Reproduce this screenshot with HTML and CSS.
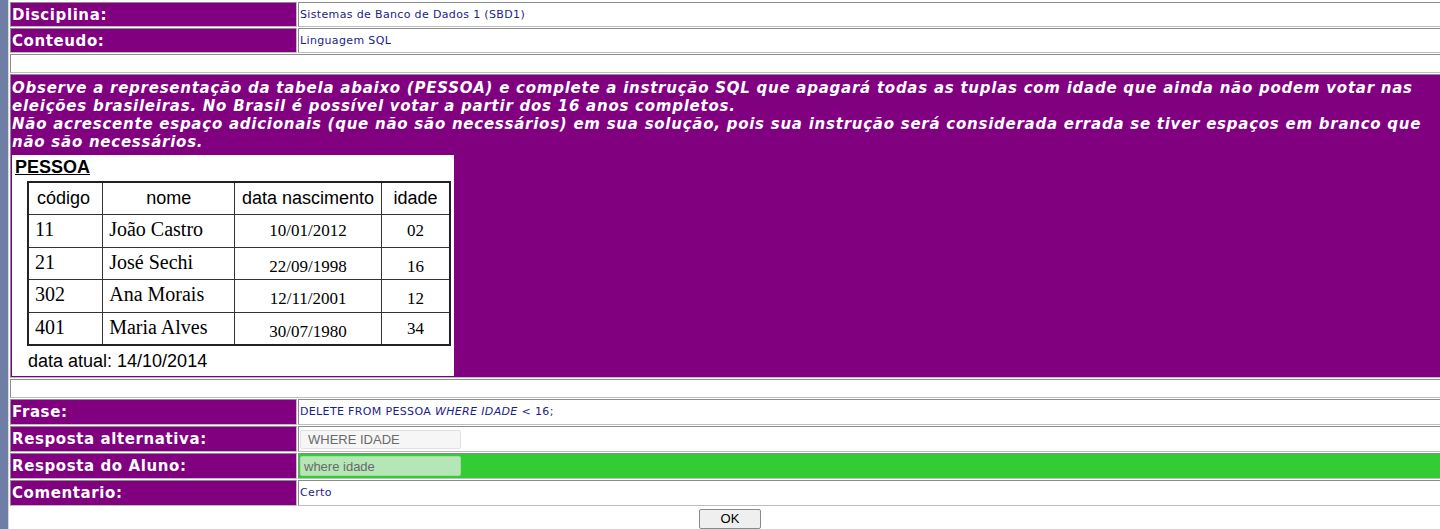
FILE: index.html
```html
<!DOCTYPE html>
<html lang="pt">
<head>
<meta charset="utf-8">
<title>Questão</title>
<link rel="stylesheet" href="styles.css">
</head>
<body>
<div class="page">
  <div class="strip"></div>
  <div class="content">
    <table class="main">
      <tr>
        <td class="label">Disciplina:</td>
        <td class="value">Sistemas de Banco de Dados 1 (SBD1)</td>
      </tr>
      <tr>
        <td class="label">Conteudo:</td>
        <td class="value">Linguagem SQL</td>
      </tr>
      <tr><td class="blank" colspan="2"></td></tr>
      <tr>
        <td class="question" colspan="2">
          <p class="qtext">Observe a representação da tabela abaixo (PESSOA) e complete a instrução SQL que apagará todas as tuplas com idade que ainda não podem votar nas eleições brasileiras. No Brasil é possível votar a partir dos 16 anos completos.<br>Não acrescente espaço adicionais (que não são necessários) em sua solução, pois sua instrução será considerada errada se tiver espaços em branco que não são necessários.</p>
          <div class="figure">
            <div class="fig-title">PESSOA</div>
            <table class="pessoa">
              <tr class="head">
                <th class="c1">código</th>
                <th class="c2">nome</th>
                <th class="c3">data nascimento</th>
                <th class="c4">idade</th>
              </tr>
              <tr>
                <td class="c1">11</td>
                <td class="c2">João Castro</td>
                <td class="c3">10/01/2012</td>
                <td class="c4">02</td>
              </tr>
              <tr>
                <td class="c1">21</td>
                <td class="c2">José Sechi</td>
                <td class="c3 low">22/09/1998</td>
                <td class="c4 low">16</td>
              </tr>
              <tr>
                <td class="c1">302</td>
                <td class="c2">Ana Morais</td>
                <td class="c3 low">12/11/2001</td>
                <td class="c4 low">12</td>
              </tr>
              <tr>
                <td class="c1">401</td>
                <td class="c2">Maria Alves</td>
                <td class="c3 low">30/07/1980</td>
                <td class="c4">34</td>
              </tr>
            </table>
            <div class="fig-date">data atual: 14/10/2014</div>
          </div>
        </td>
      </tr>
      <tr><td class="blank" colspan="2"></td></tr>
      <tr>
        <td class="label tall">Frase:</td>
        <td class="value">DELETE FROM PESSOA <i>WHERE IDADE</i> &lt; 16;</td>
      </tr>
      <tr>
        <td class="label tall">Resposta alternativa:</td>
        <td class="value"><input class="field alt" type="text" value="WHERE IDADE" readonly></td>
      </tr>
      <tr>
        <td class="label tall">Resposta do Aluno:</td>
        <td class="value ok-bg"><input class="field aluno" type="text" value="where idade" readonly></td>
      </tr>
      <tr>
        <td class="label tall">Comentario:</td>
        <td class="value">Certo</td>
      </tr>
      <tr>
        <td class="btnrow" colspan="2"><button class="okbtn" type="button">OK</button></td>
      </tr>
    </table>
  </div>
</div>
</body>
</html>
```

FILE: styles.css
```css
html, body {
  margin: 0;
  padding: 0;
  background: #ffffff;
}

.page {
  display: flex;
  width: 1440px;
  height: 529px;
  overflow: hidden;
}

.strip {
  flex: 0 0 8px;
  background: #6f7ea5;
  border-right: 1px solid #d8d8d8;
}

.content {
  flex: 1 0 auto;
  width: 1442px;
  padding-top: 1px;
}

.main {
  border-collapse: separate;
  border-spacing: 1px;
  width: 1442px;
  font-family: "DejaVu Sans", Verdana, sans-serif;
}

.main > tbody > tr > td {
  border: 1px solid;
  border-color: #8c8c8c #bdbdbd #bdbdbd #8c8c8c;
  padding: 0 1px;
}

.label {
  width: 283px;
  height: 23px;
  background: #800080;
  color: #ffffff;
  font-weight: bold;
  font-size: 15px;
  line-height: 18px;
  letter-spacing: 0.6px;
  vertical-align: middle;
}

.label.tall {
  height: 24px;
}

.value {
  color: #1c1c8a;
  font-size: 11px;
  line-height: 14px;
  letter-spacing: 0.35px;
  vertical-align: middle;
}

.blank {
  height: 17px;
}

.question {
  background: #800080;
  color: #ffffff;
  padding: 4px 1px 1px !important;
}

.qtext {
  margin: 0;
  font-weight: bold;
  font-style: italic;
  font-size: 15px;
  letter-spacing: 0.75px;
  line-height: 18px;
}

.figure {
  width: 442px;
  height: 221px;
  background: #ffffff;
  color: #000000;
  font-family: "Liberation Sans", Arial, sans-serif;
  padding: 0;
  margin-top: 4px;
  box-sizing: border-box;
  display: flex;
  flex-direction: column;
}

.fig-title {
  font-weight: bold;
  font-size: 18px;
  text-decoration: underline;
  padding: 2px 0 0 3px;
  line-height: 21px;
}

.pessoa {
  margin: 3px 0 0 15px;
  border-collapse: collapse;
  border: 2px solid #222;
  width: 424px;
}

.pessoa th, .pessoa td {
  border: 1px solid #333;
  height: 32.5px;
  padding: 0 6px;
  white-space: nowrap;
  box-sizing: border-box;
}

.pessoa th {
  font-family: "Liberation Sans", Arial, sans-serif;
  font-weight: normal;
  font-size: 18px;
  text-align: center;
}

.pessoa th.c1 { text-align: left; padding-left: 8px; }

.pessoa td {
  font-family: "Liberation Serif", "Times New Roman", serif;
  font-size: 20px;
  vertical-align: top;
  padding-top: 3px;
}

.pessoa td.c3, .pessoa td.c4 {
  font-size: 17px;
  text-align: center;
  padding-top: 6px;
}

.pessoa td.low { padding-top: 9px; }

.c1 { width: 75px; }
.c2 { width: 133px; }
.c3 { width: 147px; }
.c4 { width: 69px; }

.fig-date {
  font-size: 18px;
  padding: 5px 0 0 16px;
}

.field {
  width: 161px;
  height: 19px;
  box-sizing: border-box;
  font-family: "Liberation Sans", Arial, sans-serif;
  font-size: 13px;
  color: #6a6a6a;
  border-radius: 2px;
  margin: 0;
  outline: none;
  display: block;
}

.field.alt {
  background: #f6f6f6;
  border: 1px solid #e2e2e2;
  padding: 0 7px;
}

.field.aluno {
  background: #b5e6b5;
  border: 1px solid #a6d9a6;
  padding: 0 3px;
  height: 20px;
}

.ok-bg {
  background: #33cc33;
}

.main > tbody > tr > td.btnrow {
  border: none;
  text-align: center;
  padding: 1px 0 0;
}

.okbtn {
  width: 62px;
  height: 20px;
  font-family: "Liberation Sans", Arial, sans-serif;
  font-size: 13px;
  color: #000;
  background: #efefef;
  border: 1px solid #8a8a8a;
  border-radius: 2px;
  padding: 0;
}
```
